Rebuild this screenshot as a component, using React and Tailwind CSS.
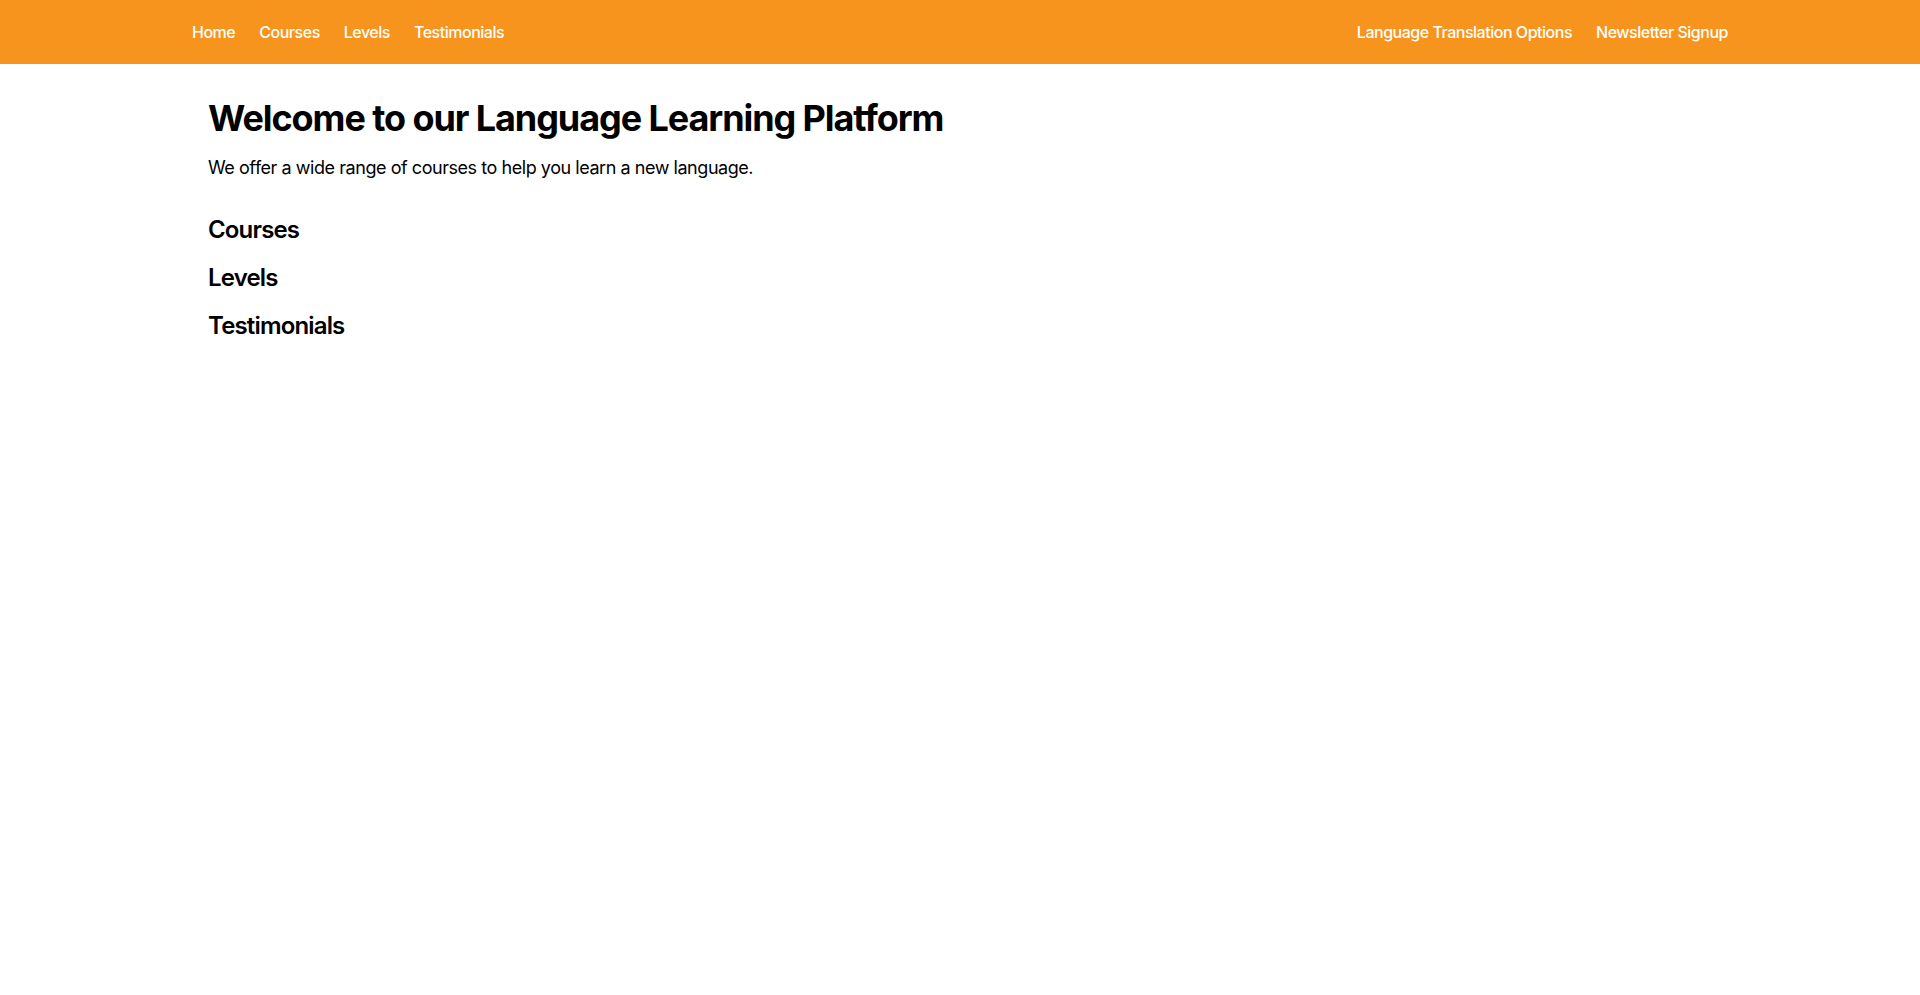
export default function App() {
  const leftLinks = ["Home", "Courses", "Levels", "Testimonials"];
  const rightLinks = ["Language Translation Options", "Newsletter Signup"];

  return (
    <div className="min-h-screen bg-white text-black font-['Inter',sans-serif] tracking-[-0.03em]">
      {/* Header */}
      <header className="bg-[#f7941d]">
        <nav className="max-w-[1536px] mx-auto h-16 flex items-center justify-between">
          <ul className="flex items-center gap-6">
            {leftLinks.map((l) => (
              <li key={l}>
                <a href="#" className="text-white text-base font-medium">
                  {l}
                </a>
              </li>
            ))}
          </ul>
          <ul className="flex items-center gap-6">
            {rightLinks.map((l) => (
              <li key={l}>
                <a href="#" className="text-white text-base font-medium">
                  {l}
                </a>
              </li>
            ))}
          </ul>
        </nav>
      </header>

      {/* Main */}
      <main className="max-w-[1536px] mx-auto px-4 pt-[34px] pb-8">
        <h1 className="text-4xl font-bold tracking-[-0.03em]">
          Welcome to our Language Learning Platform
        </h1>
        <p className="mt-4 text-lg tracking-[-0.025em]">
          We offer a wide range of courses to help you learn a new language.
        </p>

        <section className="mt-8">
          <h2 className="text-2xl font-semibold tracking-[-0.035em]">Courses</h2>
        </section>
        <section className="mt-4">
          <h2 className="text-2xl font-semibold tracking-[-0.035em]">Levels</h2>
        </section>
        <section className="mt-4">
          <h2 className="text-2xl font-semibold tracking-[-0.035em]">Testimonials</h2>
        </section>
      </main>
    </div>
  );
}
